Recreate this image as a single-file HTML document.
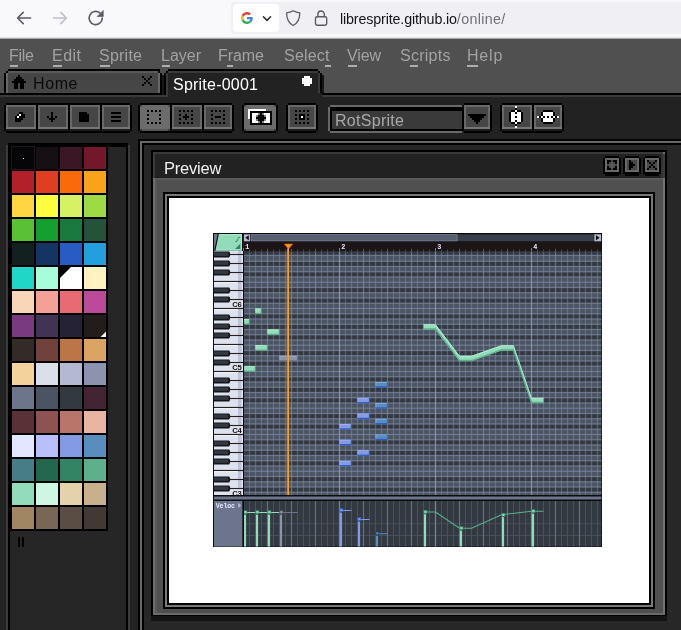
<!DOCTYPE html>
<html><head><meta charset="utf-8"><title>LibreSprite</title>
<style>
html,body{margin:0;padding:0}
body{width:681px;height:630px;overflow:hidden;background:#222;position:relative;font-family:"Liberation Sans",sans-serif}
body>div,body>svg{position:absolute;display:block}
.t{white-space:nowrap;will-change:transform}
.m{font-size:16px;line-height:20px;color:#a2a2a2}
</style></head><body>
<div style="left:0px;top:0px;width:681px;height:37px;background:#f9f9fb;"></div>
<div style="left:0px;top:37px;width:681px;height:1px;background:#e4e4e8;"></div>
<div style="left:0px;top:38px;width:681px;height:1px;background:#a9a9ad;"></div>
<div style="left:231px;top:2px;width:460px;height:32px;background:#f0f0f4;border-radius:4px"></div>
<div style="left:233px;top:4px;width:46px;height:28px;background:#ffffff;border-radius:4px"></div>
<svg style="left:0;top:0" width="340" height="37" viewBox="0 0 340 37" fill="none" stroke-linecap="round" stroke-linejoin="round">
<g stroke="#5b5b66" stroke-width="1.6"><path d="M30.6 18H17.6M23.200 12.4L17.6 18l5.600 5.600"/></g>
<g stroke="#bfbfc9" stroke-width="1.6"><path d="M53.400 18h13M60.800 12.400l5.600 5.600-5.600 5.600"/></g>
<g stroke="#5b5b66" stroke-width="1.6"><path d="M102.300 18a6.600 6.600 0 1 1-2.400-5.100"/></g>
<path d="M103.200 10.800v5.600h-5.600z" fill="#5b5b66" stroke="#5b5b66" stroke-width="0.800"/>
<g stroke="#2b2b33" stroke-width="1.5"><path d="M263.400 16.800l3.600 3.600 3.600-3.600"/></g>
<g stroke="#5b5b66" stroke-width="1.3"><path d="M293.200 10.800c2.200 1.300 4.300 1.900 6.600 2 0 6.500-2.400 10.600-6.600 12.700-4.200-2.100-6.600-6.200-6.600-12.700 2.300-.1 4.400-.7 6.600-2z"/></g>
<g stroke="#5b5b66" stroke-width="1.4"><rect x="315.500" y="16.800" width="11.200" height="8.400" rx="1.600"/><path d="M317.900 16.600v-2.400a3.200 3.200 0 0 1 6.400 0v2.400"/></g>
</svg>
<svg style="left:241px;top:12px" width="12" height="12" viewBox="0 0 48 48">
<path fill="#EA4335" d="M24 9.500c3.540 0 6.710 1.220 9.210 3.600l6.850-6.850C35.900 2.380 30.470 0 24 0 14.620 0 6.510 5.380 2.560 13.220l7.980 6.190C12.430 13.720 17.740 9.500 24 9.500z"/>
<path fill="#4285F4" d="M46.980 24.550c0-1.570-.15-3.090-.38-4.550H24v9.020h12.940c-.58 2.960-2.260 5.480-4.780 7.180l7.730 6c4.510-4.180 7.090-10.360 7.090-17.650z"/>
<path fill="#FBBC05" d="M10.530 28.590c-.48-1.450-.76-2.990-.76-4.590s.27-3.140.76-4.590l-7.980-6.190C.92 16.460 0 20.120 0 24c0 3.880.92 7.540 2.560 10.780l7.970-6.190z"/>
<path fill="#34A853" d="M24 48c6.480 0 11.930-2.130 15.890-5.810l-7.730-6c-2.150 1.450-4.920 2.300-8.160 2.300-6.260 0-11.570-4.220-13.470-9.910l-7.980 6.190C6.510 42.620 14.620 48 24 48z"/>
</svg>
<div class="t" style="left:340px;top:9.5px;font-size:14.3px;line-height:18px;color:#15141a" id="url"><span style="letter-spacing:-0.150px">libresprite.github.io</span><span style="color:#6f6f78;letter-spacing:0.330px">/online/</span></div>
<div style="left:0px;top:39px;width:681px;height:54px;background:#505050;"></div>
<div class="t m" id="m0" style="left:9.2px;top:45.5px;letter-spacing:-0.260px;">File</div>
<div class="t m" id="m1" style="left:52.2px;top:45.5px;letter-spacing:0.474px;">Edit</div>
<div class="t m" id="m2" style="left:99.2px;top:45.5px;letter-spacing:0.241px;">Sprite</div>
<div class="t m" id="m3" style="left:161.2px;top:45.5px;letter-spacing:-0.008px;">Layer</div>
<div class="t m" id="m4" style="left:218.2px;top:45.5px;letter-spacing:-0.059px;">Frame</div>
<div class="t m" id="m5" style="left:283.7px;top:45.5px;letter-spacing:0.206px;">Select</div>
<div class="t m" id="m6" style="left:347.2px;top:45.5px;letter-spacing:-0.130px;">View</div>
<div class="t m" id="m7" style="left:399.7px;top:45.5px;letter-spacing:0.266px;">Scripts</div>
<div class="t m" id="m8" style="left:466.59999999999997px;top:45.5px;letter-spacing:0.798px;">Help</div>
<div style="left:10px;top:65px;width:8px;height:2px;background:#aeaeae;"></div>
<div style="left:53px;top:65px;width:9px;height:2px;background:#aeaeae;"></div>
<div style="left:100px;top:65px;width:9.5px;height:2px;background:#aeaeae;"></div>
<div style="left:162px;top:65px;width:8px;height:2px;background:#aeaeae;"></div>
<div style="left:227px;top:65px;width:6px;height:2px;background:#aeaeae;"></div>
<div style="left:325px;top:65px;width:5.5px;height:2px;background:#aeaeae;"></div>
<div style="left:348px;top:65px;width:9px;height:2px;background:#aeaeae;"></div>
<div style="left:410px;top:65px;width:7.5px;height:2px;background:#aeaeae;"></div>
<div style="left:467.4px;top:65px;width:11px;height:2px;background:#aeaeae;"></div>
<div style="left:0px;top:93px;width:681px;height:2px;background:#000000;"></div>
<div style="left:0px;top:95px;width:681px;height:2px;background:#3a3a3a;"></div>
<div style="left:0px;top:97px;width:681px;height:533px;background:#222222;"></div>
<div style="left:8px;top:69px;width:152px;height:2px;background:#000000;"></div>
<div style="left:4px;top:73px;width:2px;height:20px;background:#000000;"></div>
<div style="left:6px;top:71px;width:2px;height:2px;background:#000000;"></div>
<div style="left:160px;top:73px;width:2px;height:22px;background:#000000;"></div>
<div style="left:158px;top:71px;width:2px;height:2px;background:#000000;"></div>
<div style="left:8px;top:71px;width:150px;height:22px;background:#464646;"></div>
<div style="left:6px;top:73px;width:2px;height:20px;background:#686868;"></div>
<div style="left:8px;top:71px;width:150px;height:2px;background:#5a5a5a;"></div>
<div style="left:158px;top:73px;width:2px;height:20px;background:#686868;"></div>
<div style="left:162px;top:75px;width:2px;height:20px;background:#181513;"></div>
<div style="left:168px;top:69px;width:150px;height:2px;background:#000000;"></div>
<div style="left:164px;top:73px;width:2px;height:22px;background:#000000;"></div>
<div style="left:166px;top:71px;width:2px;height:2px;background:#000000;"></div>
<div style="left:318px;top:71px;width:2px;height:2px;background:#000000;"></div>
<div style="left:320px;top:73px;width:2px;height:20px;background:#000000;"></div>
<div style="left:322px;top:75px;width:2px;height:18px;background:#181513;"></div>
<div style="left:166px;top:73px;width:154px;height:24px;background:#222222;"></div>
<div style="left:168px;top:71px;width:150px;height:2px;background:#3a3a3a;"></div>
<div style="left:166px;top:73px;width:2px;height:24px;background:#3a3a3a;"></div>
<div style="left:318px;top:73px;width:2px;height:20px;background:#3a3a3a;"></div>
<div style="left:320px;top:93px;width:2px;height:4px;background:#222222;"></div>
<div style="left:318px;top:93px;width:2px;height:4px;background:#222222;"></div>
<div style="left:18px;top:75px;width:2px;height:2px;background:#000000;"></div>
<div style="left:16px;top:77px;width:6px;height:2px;background:#000000;"></div>
<div style="left:14px;top:79px;width:10px;height:2px;background:#000000;"></div>
<div style="left:12px;top:81px;width:14px;height:2px;background:#000000;"></div>
<div style="left:14px;top:83px;width:4px;height:2px;background:#000000;"></div>
<div style="left:20px;top:83px;width:4px;height:2px;background:#000000;"></div>
<div style="left:14px;top:85px;width:4px;height:2px;background:#000000;"></div>
<div style="left:20px;top:85px;width:4px;height:2px;background:#000000;"></div>
<div style="left:14px;top:87px;width:4px;height:2px;background:#000000;"></div>
<div style="left:20px;top:87px;width:4px;height:2px;background:#000000;"></div>
<div class="t" id="thome" style="left:33px;top:74px;font-size:16px;line-height:20px;color:#0a0a0a;letter-spacing:0.604px;">Home</div>
<div class="t" id="tsprite" style="left:173px;top:74.5px;font-size:16px;line-height:20px;color:#ffffff;letter-spacing:0.228px;">Sprite-0001</div>
<div style="left:142px;top:76px;width:2px;height:2px;background:#000000;"></div>
<div style="left:150px;top:76px;width:2px;height:2px;background:#000000;"></div>
<div style="left:144px;top:78px;width:2px;height:2px;background:#000000;"></div>
<div style="left:148px;top:78px;width:2px;height:2px;background:#000000;"></div>
<div style="left:146px;top:80px;width:2px;height:2px;background:#000000;"></div>
<div style="left:144px;top:82px;width:2px;height:2px;background:#000000;"></div>
<div style="left:148px;top:82px;width:2px;height:2px;background:#000000;"></div>
<div style="left:142px;top:84px;width:2px;height:2px;background:#000000;"></div>
<div style="left:150px;top:84px;width:2px;height:2px;background:#000000;"></div>
<div style="left:304px;top:76px;width:6px;height:2px;background:#ffffff;"></div>
<div style="left:302px;top:78px;width:10px;height:2px;background:#ffffff;"></div>
<div style="left:302px;top:80px;width:10px;height:2px;background:#ffffff;"></div>
<div style="left:302px;top:82px;width:10px;height:2px;background:#ffffff;"></div>
<div style="left:304px;top:84px;width:6px;height:2px;background:#ffffff;"></div>
<div style="left:6px;top:103px;width:124px;height:2px;background:#000000;"></div>
<div style="left:6px;top:129px;width:124px;height:2px;background:#1b1b1b;"></div>
<div style="left:6px;top:131px;width:124px;height:2px;background:#000000;"></div>
<div style="left:4px;top:105px;width:2px;height:26px;background:#000000;"></div>
<div style="left:6px;top:105px;width:30px;height:24px;background:#686868;"></div>
<div style="left:8px;top:107px;width:26px;height:20px;background:#464646;"></div>
<div style="left:6px;top:127px;width:30px;height:2px;background:#767676;"></div>
<div style="left:36px;top:105px;width:2px;height:26px;background:#000000;"></div>
<div style="left:38px;top:105px;width:30px;height:24px;background:#686868;"></div>
<div style="left:40px;top:107px;width:26px;height:20px;background:#464646;"></div>
<div style="left:38px;top:127px;width:30px;height:2px;background:#767676;"></div>
<div style="left:68px;top:105px;width:2px;height:26px;background:#000000;"></div>
<div style="left:70px;top:105px;width:30px;height:24px;background:#686868;"></div>
<div style="left:72px;top:107px;width:26px;height:20px;background:#464646;"></div>
<div style="left:70px;top:127px;width:30px;height:2px;background:#767676;"></div>
<div style="left:100px;top:105px;width:2px;height:26px;background:#000000;"></div>
<div style="left:102px;top:105px;width:28px;height:24px;background:#686868;"></div>
<div style="left:104px;top:107px;width:24px;height:20px;background:#464646;"></div>
<div style="left:102px;top:127px;width:28px;height:2px;background:#767676;"></div>
<div style="left:130px;top:105px;width:2px;height:26px;background:#000000;"></div>
<div style="left:140px;top:103px;width:92px;height:2px;background:#000000;"></div>
<div style="left:140px;top:129px;width:92px;height:2px;background:#1b1b1b;"></div>
<div style="left:140px;top:131px;width:92px;height:2px;background:#000000;"></div>
<div style="left:138px;top:105px;width:2px;height:26px;background:#000000;"></div>
<div style="left:140px;top:105px;width:30px;height:24px;background:#6c6c6c;"></div>
<div style="left:140px;top:129px;width:30px;height:2px;background:#565656;"></div>
<div style="left:140px;top:105px;width:2px;height:2px;background:#4a4a4a;"></div>
<div style="left:168px;top:105px;width:2px;height:2px;background:#4a4a4a;"></div>
<div style="left:140px;top:129px;width:2px;height:2px;background:#3a3a3a;"></div>
<div style="left:168px;top:129px;width:2px;height:2px;background:#3a3a3a;"></div>
<div style="left:170px;top:105px;width:2px;height:26px;background:#000000;"></div>
<div style="left:172px;top:105px;width:30px;height:24px;background:#686868;"></div>
<div style="left:174px;top:107px;width:26px;height:20px;background:#464646;"></div>
<div style="left:172px;top:127px;width:30px;height:2px;background:#767676;"></div>
<div style="left:202px;top:105px;width:2px;height:26px;background:#000000;"></div>
<div style="left:204px;top:105px;width:28px;height:24px;background:#686868;"></div>
<div style="left:206px;top:107px;width:24px;height:20px;background:#464646;"></div>
<div style="left:204px;top:127px;width:28px;height:2px;background:#767676;"></div>
<div style="left:232px;top:105px;width:2px;height:26px;background:#000000;"></div>
<div style="left:244px;top:103px;width:32px;height:2px;background:#000000;"></div>
<div style="left:244px;top:129px;width:32px;height:2px;background:#1b1b1b;"></div>
<div style="left:244px;top:131px;width:32px;height:2px;background:#000000;"></div>
<div style="left:242px;top:105px;width:2px;height:26px;background:#000000;"></div>
<div style="left:244px;top:105px;width:32px;height:24px;background:#6c6c6c;"></div>
<div style="left:244px;top:129px;width:32px;height:2px;background:#565656;"></div>
<div style="left:244px;top:105px;width:2px;height:2px;background:#4a4a4a;"></div>
<div style="left:274px;top:105px;width:2px;height:2px;background:#4a4a4a;"></div>
<div style="left:244px;top:129px;width:2px;height:2px;background:#3a3a3a;"></div>
<div style="left:274px;top:129px;width:2px;height:2px;background:#3a3a3a;"></div>
<div style="left:276px;top:105px;width:2px;height:26px;background:#000000;"></div>
<div style="left:288px;top:103px;width:28px;height:2px;background:#000000;"></div>
<div style="left:288px;top:129px;width:28px;height:2px;background:#1b1b1b;"></div>
<div style="left:288px;top:131px;width:28px;height:2px;background:#000000;"></div>
<div style="left:286px;top:105px;width:2px;height:26px;background:#000000;"></div>
<div style="left:288px;top:105px;width:28px;height:24px;background:#686868;"></div>
<div style="left:290px;top:107px;width:24px;height:20px;background:#464646;"></div>
<div style="left:288px;top:127px;width:28px;height:2px;background:#767676;"></div>
<div style="left:316px;top:105px;width:2px;height:26px;background:#000000;"></div>
<div style="left:464px;top:103px;width:26px;height:2px;background:#000000;"></div>
<div style="left:464px;top:129px;width:26px;height:2px;background:#1b1b1b;"></div>
<div style="left:464px;top:131px;width:26px;height:2px;background:#000000;"></div>
<div style="left:462px;top:105px;width:2px;height:26px;background:#000000;"></div>
<div style="left:464px;top:105px;width:26px;height:24px;background:#686868;"></div>
<div style="left:466px;top:107px;width:22px;height:20px;background:#464646;"></div>
<div style="left:464px;top:127px;width:26px;height:2px;background:#767676;"></div>
<div style="left:490px;top:105px;width:2px;height:26px;background:#000000;"></div>
<div style="left:502px;top:103px;width:60px;height:2px;background:#000000;"></div>
<div style="left:502px;top:129px;width:60px;height:2px;background:#1b1b1b;"></div>
<div style="left:502px;top:131px;width:60px;height:2px;background:#000000;"></div>
<div style="left:500px;top:105px;width:2px;height:26px;background:#000000;"></div>
<div style="left:502px;top:105px;width:30px;height:24px;background:#686868;"></div>
<div style="left:504px;top:107px;width:26px;height:20px;background:#464646;"></div>
<div style="left:502px;top:127px;width:30px;height:2px;background:#767676;"></div>
<div style="left:532px;top:105px;width:2px;height:26px;background:#000000;"></div>
<div style="left:534px;top:105px;width:28px;height:24px;background:#686868;"></div>
<div style="left:536px;top:107px;width:24px;height:20px;background:#464646;"></div>
<div style="left:534px;top:127px;width:28px;height:2px;background:#767676;"></div>
<div style="left:562px;top:105px;width:2px;height:26px;background:#000000;"></div>
<div style="left:19px;top:112px;width:4px;height:2px;background:#000000;"></div>
<div style="left:17px;top:114px;width:2px;height:2px;background:#000000;"></div>
<div style="left:19px;top:114px;width:2px;height:2px;background:#ffffff;"></div>
<div style="left:21px;top:114px;width:4px;height:2px;background:#000000;"></div>
<div style="left:15px;top:116px;width:2px;height:2px;background:#000000;"></div>
<div style="left:17px;top:116px;width:2px;height:2px;background:#ffffff;"></div>
<div style="left:19px;top:116px;width:6px;height:2px;background:#000000;"></div>
<div style="left:15px;top:118px;width:8px;height:2px;background:#000000;"></div>
<div style="left:15px;top:120px;width:6px;height:2px;background:#000000;"></div>
<div style="left:51px;top:112px;width:2px;height:10px;background:#000000;"></div>
<div style="left:47px;top:116px;width:2px;height:2px;background:#000000;"></div>
<div style="left:55px;top:116px;width:2px;height:2px;background:#000000;"></div>
<div style="left:49px;top:118px;width:6px;height:2px;background:#000000;"></div>
<div style="left:79px;top:112px;width:8px;height:2px;background:#000000;"></div>
<div style="left:79px;top:114px;width:10px;height:2px;background:#000000;"></div>
<div style="left:79px;top:116px;width:10px;height:2px;background:#000000;"></div>
<div style="left:79px;top:118px;width:10px;height:2px;background:#000000;"></div>
<div style="left:79px;top:120px;width:10px;height:2px;background:#000000;"></div>
<div style="left:111px;top:112px;width:10px;height:2px;background:#000000;"></div>
<div style="left:111px;top:116px;width:10px;height:2px;background:#000000;"></div>
<div style="left:111px;top:120px;width:10px;height:2px;background:#000000;"></div>
<div style="left:147px;top:110px;width:2px;height:2px;background:#000000;"></div>
<div style="left:147px;top:114px;width:2px;height:2px;background:#000000;"></div>
<div style="left:147px;top:118px;width:2px;height:2px;background:#000000;"></div>
<div style="left:147px;top:122px;width:2px;height:2px;background:#000000;"></div>
<div style="left:151px;top:110px;width:2px;height:2px;background:#000000;"></div>
<div style="left:151px;top:122px;width:2px;height:2px;background:#000000;"></div>
<div style="left:155px;top:110px;width:2px;height:2px;background:#000000;"></div>
<div style="left:155px;top:122px;width:2px;height:2px;background:#000000;"></div>
<div style="left:159px;top:110px;width:2px;height:2px;background:#000000;"></div>
<div style="left:159px;top:114px;width:2px;height:2px;background:#000000;"></div>
<div style="left:159px;top:118px;width:2px;height:2px;background:#000000;"></div>
<div style="left:159px;top:122px;width:2px;height:2px;background:#000000;"></div>
<div style="left:179px;top:110px;width:2px;height:2px;background:#000000;"></div>
<div style="left:179px;top:114px;width:2px;height:2px;background:#000000;"></div>
<div style="left:179px;top:118px;width:2px;height:2px;background:#000000;"></div>
<div style="left:179px;top:122px;width:2px;height:2px;background:#000000;"></div>
<div style="left:183px;top:110px;width:2px;height:2px;background:#000000;"></div>
<div style="left:183px;top:122px;width:2px;height:2px;background:#000000;"></div>
<div style="left:187px;top:110px;width:2px;height:2px;background:#000000;"></div>
<div style="left:187px;top:122px;width:2px;height:2px;background:#000000;"></div>
<div style="left:191px;top:110px;width:2px;height:2px;background:#000000;"></div>
<div style="left:191px;top:114px;width:2px;height:2px;background:#000000;"></div>
<div style="left:191px;top:118px;width:2px;height:2px;background:#000000;"></div>
<div style="left:191px;top:122px;width:2px;height:2px;background:#000000;"></div>
<div style="left:185px;top:114px;width:2px;height:6px;background:#000000;"></div>
<div style="left:183px;top:116px;width:6px;height:2px;background:#000000;"></div>
<div style="left:211px;top:110px;width:2px;height:2px;background:#000000;"></div>
<div style="left:211px;top:114px;width:2px;height:2px;background:#000000;"></div>
<div style="left:211px;top:118px;width:2px;height:2px;background:#000000;"></div>
<div style="left:211px;top:122px;width:2px;height:2px;background:#000000;"></div>
<div style="left:215px;top:110px;width:2px;height:2px;background:#000000;"></div>
<div style="left:215px;top:122px;width:2px;height:2px;background:#000000;"></div>
<div style="left:219px;top:110px;width:2px;height:2px;background:#000000;"></div>
<div style="left:219px;top:122px;width:2px;height:2px;background:#000000;"></div>
<div style="left:223px;top:110px;width:2px;height:2px;background:#000000;"></div>
<div style="left:223px;top:114px;width:2px;height:2px;background:#000000;"></div>
<div style="left:223px;top:118px;width:2px;height:2px;background:#000000;"></div>
<div style="left:223px;top:122px;width:2px;height:2px;background:#000000;"></div>
<div style="left:215px;top:116px;width:6px;height:2px;background:#000000;"></div>
<div style="left:248px;top:109px;width:18px;height:10px;background:#ffffff;"></div>
<div style="left:250px;top:111px;width:22px;height:14px;background:#000000;"></div>
<div style="left:252px;top:113px;width:18px;height:10px;background:#ffffff;"></div>
<div style="left:258px;top:113px;width:2px;height:2px;background:#808080;"></div>
<div style="left:260px;top:113px;width:2px;height:2px;background:#000000;"></div>
<div style="left:262px;top:113px;width:2px;height:2px;background:#808080;"></div>
<div style="left:256px;top:115px;width:2px;height:2px;background:#808080;"></div>
<div style="left:258px;top:115px;width:6px;height:2px;background:#000000;"></div>
<div style="left:264px;top:115px;width:2px;height:2px;background:#808080;"></div>
<div style="left:256px;top:117px;width:10px;height:2px;background:#000000;"></div>
<div style="left:256px;top:119px;width:2px;height:2px;background:#808080;"></div>
<div style="left:258px;top:119px;width:6px;height:2px;background:#000000;"></div>
<div style="left:264px;top:119px;width:2px;height:2px;background:#808080;"></div>
<div style="left:258px;top:121px;width:2px;height:2px;background:#808080;"></div>
<div style="left:260px;top:121px;width:2px;height:2px;background:#000000;"></div>
<div style="left:262px;top:121px;width:2px;height:2px;background:#808080;"></div>
<div style="left:295px;top:110px;width:2px;height:2px;background:#000000;"></div>
<div style="left:295px;top:114px;width:2px;height:2px;background:#000000;"></div>
<div style="left:295px;top:118px;width:2px;height:2px;background:#000000;"></div>
<div style="left:295px;top:122px;width:2px;height:2px;background:#000000;"></div>
<div style="left:299px;top:110px;width:2px;height:2px;background:#000000;"></div>
<div style="left:299px;top:122px;width:2px;height:2px;background:#000000;"></div>
<div style="left:303px;top:110px;width:2px;height:2px;background:#000000;"></div>
<div style="left:303px;top:122px;width:2px;height:2px;background:#000000;"></div>
<div style="left:307px;top:110px;width:2px;height:2px;background:#000000;"></div>
<div style="left:307px;top:114px;width:2px;height:2px;background:#000000;"></div>
<div style="left:307px;top:118px;width:2px;height:2px;background:#000000;"></div>
<div style="left:307px;top:122px;width:2px;height:2px;background:#000000;"></div>
<div style="left:299px;top:114px;width:6px;height:6px;background:#000000;"></div>
<div style="left:301px;top:116px;width:2px;height:2px;background:#ffffff;"></div>
<div style="left:328px;top:107px;width:2px;height:24px;background:#686868;"></div>
<div style="left:330px;top:105px;width:132px;height:2px;background:#686868;"></div>
<div style="left:330px;top:131px;width:132px;height:2px;background:#686868;"></div>
<div style="left:330px;top:107px;width:132px;height:24px;background:#000000;"></div>
<div style="left:332px;top:111px;width:130px;height:18px;background:#3a3a3a;"></div>
<div class="t" id="trot" style="left:334.5px;top:111.3px;font-size:16px;line-height:20px;color:#a8a8a8;letter-spacing:0.287px;">RotSprite</div>
<div style="left:468px;top:114px;width:18px;height:2px;background:#000000;"></div>
<div style="left:470px;top:116px;width:14px;height:2px;background:#000000;"></div>
<div style="left:472px;top:118px;width:10px;height:2px;background:#000000;"></div>
<div style="left:474px;top:120px;width:6px;height:2px;background:#000000;"></div>
<div style="left:476px;top:122px;width:2px;height:2px;background:#000000;"></div>
<div style="left:511px;top:110px;width:10px;height:2px;background:#000000;"></div>
<div style="left:509px;top:112px;width:2px;height:2px;background:#000000;"></div>
<div style="left:511px;top:112px;width:10px;height:2px;background:#ffffff;"></div>
<div style="left:521px;top:112px;width:2px;height:2px;background:#000000;"></div>
<div style="left:509px;top:114px;width:2px;height:2px;background:#000000;"></div>
<div style="left:511px;top:114px;width:10px;height:2px;background:#ffffff;"></div>
<div style="left:521px;top:114px;width:2px;height:2px;background:#000000;"></div>
<div style="left:509px;top:116px;width:2px;height:2px;background:#000000;"></div>
<div style="left:511px;top:116px;width:10px;height:2px;background:#ffffff;"></div>
<div style="left:521px;top:116px;width:2px;height:2px;background:#000000;"></div>
<div style="left:509px;top:118px;width:2px;height:2px;background:#000000;"></div>
<div style="left:511px;top:118px;width:10px;height:2px;background:#ffffff;"></div>
<div style="left:521px;top:118px;width:2px;height:2px;background:#000000;"></div>
<div style="left:509px;top:120px;width:2px;height:2px;background:#000000;"></div>
<div style="left:511px;top:120px;width:10px;height:2px;background:#ffffff;"></div>
<div style="left:521px;top:120px;width:2px;height:2px;background:#000000;"></div>
<div style="left:511px;top:122px;width:10px;height:2px;background:#000000;"></div>
<div style="left:515px;top:106px;width:2px;height:2px;background:#ffffff;"></div>
<div style="left:515px;top:108px;width:2px;height:2px;background:#000000;"></div>
<div style="left:515px;top:110px;width:2px;height:2px;background:#ffffff;"></div>
<div style="left:515px;top:112px;width:2px;height:2px;background:#000000;"></div>
<div style="left:515px;top:114px;width:2px;height:2px;background:#ffffff;"></div>
<div style="left:515px;top:116px;width:2px;height:2px;background:#000000;"></div>
<div style="left:515px;top:118px;width:2px;height:2px;background:#ffffff;"></div>
<div style="left:515px;top:120px;width:2px;height:2px;background:#000000;"></div>
<div style="left:515px;top:122px;width:2px;height:2px;background:#ffffff;"></div>
<div style="left:515px;top:124px;width:2px;height:2px;background:#000000;"></div>
<div style="left:515px;top:126px;width:2px;height:2px;background:#ffffff;"></div>
<div style="left:543px;top:110px;width:10px;height:2px;background:#000000;"></div>
<div style="left:541px;top:112px;width:2px;height:2px;background:#000000;"></div>
<div style="left:543px;top:112px;width:10px;height:2px;background:#ffffff;"></div>
<div style="left:553px;top:112px;width:2px;height:2px;background:#000000;"></div>
<div style="left:541px;top:114px;width:2px;height:2px;background:#000000;"></div>
<div style="left:543px;top:114px;width:10px;height:2px;background:#ffffff;"></div>
<div style="left:553px;top:114px;width:2px;height:2px;background:#000000;"></div>
<div style="left:541px;top:116px;width:2px;height:2px;background:#000000;"></div>
<div style="left:543px;top:116px;width:10px;height:2px;background:#ffffff;"></div>
<div style="left:553px;top:116px;width:2px;height:2px;background:#000000;"></div>
<div style="left:541px;top:118px;width:2px;height:2px;background:#000000;"></div>
<div style="left:543px;top:118px;width:10px;height:2px;background:#ffffff;"></div>
<div style="left:553px;top:118px;width:2px;height:2px;background:#000000;"></div>
<div style="left:541px;top:120px;width:2px;height:2px;background:#000000;"></div>
<div style="left:543px;top:120px;width:10px;height:2px;background:#ffffff;"></div>
<div style="left:553px;top:120px;width:2px;height:2px;background:#000000;"></div>
<div style="left:543px;top:122px;width:10px;height:2px;background:#000000;"></div>
<div style="left:537px;top:116px;width:2px;height:2px;background:#ffffff;"></div>
<div style="left:539px;top:116px;width:2px;height:2px;background:#000000;"></div>
<div style="left:541px;top:116px;width:2px;height:2px;background:#ffffff;"></div>
<div style="left:543px;top:116px;width:2px;height:2px;background:#000000;"></div>
<div style="left:545px;top:116px;width:2px;height:2px;background:#ffffff;"></div>
<div style="left:547px;top:116px;width:2px;height:2px;background:#000000;"></div>
<div style="left:549px;top:116px;width:2px;height:2px;background:#ffffff;"></div>
<div style="left:551px;top:116px;width:2px;height:2px;background:#000000;"></div>
<div style="left:553px;top:116px;width:2px;height:2px;background:#ffffff;"></div>
<div style="left:555px;top:116px;width:2px;height:2px;background:#000000;"></div>
<div style="left:557px;top:116px;width:2px;height:2px;background:#ffffff;"></div>
<div style="left:6px;top:145px;width:2px;height:485px;background:#3a3a3a;"></div>
<div style="left:8px;top:143px;width:2px;height:487px;background:#000000;"></div>
<div style="left:10px;top:143px;width:118px;height:4px;background:#000000;"></div>
<div style="left:10px;top:147px;width:116px;height:483px;background:#262626;"></div>
<div style="left:126px;top:143px;width:2px;height:487px;background:#000000;"></div>
<div style="left:128px;top:145px;width:2px;height:485px;background:#3a3a3a;"></div>
<div style="left:10px;top:147px;width:98px;height:384px;background:#000000;"></div>
<div style="left:12px;top:147px;width:22px;height:22px;background:#060608;"></div>
<div style="left:36px;top:147px;width:22px;height:22px;background:#141013;"></div>
<div style="left:60px;top:147px;width:22px;height:22px;background:#3b1725;"></div>
<div style="left:84px;top:147px;width:22px;height:22px;background:#73172d;"></div>
<div style="left:12px;top:171px;width:22px;height:22px;background:#b4202a;"></div>
<div style="left:36px;top:171px;width:22px;height:22px;background:#df3e23;"></div>
<div style="left:60px;top:171px;width:22px;height:22px;background:#fa6a0a;"></div>
<div style="left:84px;top:171px;width:22px;height:22px;background:#f9a31b;"></div>
<div style="left:12px;top:195px;width:22px;height:22px;background:#ffd541;"></div>
<div style="left:36px;top:195px;width:22px;height:22px;background:#fffc40;"></div>
<div style="left:60px;top:195px;width:22px;height:22px;background:#d6f264;"></div>
<div style="left:84px;top:195px;width:22px;height:22px;background:#9cdb43;"></div>
<div style="left:12px;top:219px;width:22px;height:22px;background:#59c135;"></div>
<div style="left:36px;top:219px;width:22px;height:22px;background:#14a02e;"></div>
<div style="left:60px;top:219px;width:22px;height:22px;background:#1a7a3e;"></div>
<div style="left:84px;top:219px;width:22px;height:22px;background:#24523b;"></div>
<div style="left:12px;top:243px;width:22px;height:22px;background:#122020;"></div>
<div style="left:36px;top:243px;width:22px;height:22px;background:#143464;"></div>
<div style="left:60px;top:243px;width:22px;height:22px;background:#285cc4;"></div>
<div style="left:84px;top:243px;width:22px;height:22px;background:#249fde;"></div>
<div style="left:12px;top:267px;width:22px;height:22px;background:#20d6c7;"></div>
<div style="left:36px;top:267px;width:22px;height:22px;background:#a6fcdb;"></div>
<div style="left:60px;top:267px;width:22px;height:22px;background:#ffffff;"></div>
<div style="left:84px;top:267px;width:22px;height:22px;background:#fef3c0;"></div>
<div style="left:12px;top:291px;width:22px;height:22px;background:#fad6b8;"></div>
<div style="left:36px;top:291px;width:22px;height:22px;background:#f5a097;"></div>
<div style="left:60px;top:291px;width:22px;height:22px;background:#e86a73;"></div>
<div style="left:84px;top:291px;width:22px;height:22px;background:#bc4a9b;"></div>
<div style="left:12px;top:315px;width:22px;height:22px;background:#793a80;"></div>
<div style="left:36px;top:315px;width:22px;height:22px;background:#403353;"></div>
<div style="left:60px;top:315px;width:22px;height:22px;background:#242234;"></div>
<div style="left:84px;top:315px;width:22px;height:22px;background:#221c1a;"></div>
<div style="left:12px;top:339px;width:22px;height:22px;background:#322b28;"></div>
<div style="left:36px;top:339px;width:22px;height:22px;background:#71413b;"></div>
<div style="left:60px;top:339px;width:22px;height:22px;background:#bb7547;"></div>
<div style="left:84px;top:339px;width:22px;height:22px;background:#dba463;"></div>
<div style="left:12px;top:363px;width:22px;height:22px;background:#f4d29c;"></div>
<div style="left:36px;top:363px;width:22px;height:22px;background:#dae0ea;"></div>
<div style="left:60px;top:363px;width:22px;height:22px;background:#b3b9d1;"></div>
<div style="left:84px;top:363px;width:22px;height:22px;background:#8b93af;"></div>
<div style="left:12px;top:387px;width:22px;height:22px;background:#6d758d;"></div>
<div style="left:36px;top:387px;width:22px;height:22px;background:#4a5462;"></div>
<div style="left:60px;top:387px;width:22px;height:22px;background:#333941;"></div>
<div style="left:84px;top:387px;width:22px;height:22px;background:#422433;"></div>
<div style="left:12px;top:411px;width:22px;height:22px;background:#5b3138;"></div>
<div style="left:36px;top:411px;width:22px;height:22px;background:#8e5252;"></div>
<div style="left:60px;top:411px;width:22px;height:22px;background:#ba756a;"></div>
<div style="left:84px;top:411px;width:22px;height:22px;background:#e9b5a3;"></div>
<div style="left:12px;top:435px;width:22px;height:22px;background:#e3e6ff;"></div>
<div style="left:36px;top:435px;width:22px;height:22px;background:#b9bffb;"></div>
<div style="left:60px;top:435px;width:22px;height:22px;background:#849be4;"></div>
<div style="left:84px;top:435px;width:22px;height:22px;background:#588dbe;"></div>
<div style="left:12px;top:459px;width:22px;height:22px;background:#477d85;"></div>
<div style="left:36px;top:459px;width:22px;height:22px;background:#23674e;"></div>
<div style="left:60px;top:459px;width:22px;height:22px;background:#328464;"></div>
<div style="left:84px;top:459px;width:22px;height:22px;background:#5daf8d;"></div>
<div style="left:12px;top:483px;width:22px;height:22px;background:#92dcba;"></div>
<div style="left:36px;top:483px;width:22px;height:22px;background:#cdf7e2;"></div>
<div style="left:60px;top:483px;width:22px;height:22px;background:#e4d2aa;"></div>
<div style="left:84px;top:483px;width:22px;height:22px;background:#c7b08b;"></div>
<div style="left:12px;top:507px;width:22px;height:22px;background:#a08662;"></div>
<div style="left:36px;top:507px;width:22px;height:22px;background:#796755;"></div>
<div style="left:60px;top:507px;width:22px;height:22px;background:#5a4e44;"></div>
<div style="left:84px;top:507px;width:22px;height:22px;background:#423934;"></div>
<div style="left:11px;top:146px;width:24px;height:24px;background:#19191c;"></div>
<div style="left:12px;top:147px;width:22px;height:22px;background:#060608;"></div>
<div style="left:23px;top:158px;width:1px;height:1px;background:#ffffff;"></div>
<svg style="left:60px;top:267px" width="22" height="22"><path d="M0 0H11L0 11z" fill="#000"/></svg>
<svg style="left:84px;top:315px" width="22" height="22"><path d="M22 16.500V22H16.500z" fill="#fff"/></svg>
<div style="left:18px;top:537px;width:2px;height:10px;background:#000000;"></div>
<div style="left:22px;top:537px;width:2px;height:10px;background:#000000;"></div>
<div style="left:138px;top:139px;width:543px;height:2px;background:#000000;"></div>
<div style="left:138px;top:141px;width:2px;height:489px;background:#000000;"></div>
<div style="left:140px;top:141px;width:541px;height:2px;background:#686868;"></div>
<div style="left:140px;top:143px;width:2px;height:487px;background:#686868;"></div>
<div style="left:142px;top:143px;width:539px;height:2px;background:#000000;"></div>
<div style="left:142px;top:145px;width:2px;height:485px;background:#000000;"></div>
<div style="left:144px;top:145px;width:537px;height:485px;background:#272727;"></div>
<div style="left:151px;top:150px;width:516px;height:466px;background:#000000;"></div>
<div style="left:151px;top:616px;width:516px;height:5px;background:#141414;"></div>
<div style="left:153px;top:152px;width:512px;height:26px;background:#222222;"></div>
<div style="left:153px;top:152px;width:510px;height:2px;background:#3a3a3a;"></div>
<div style="left:153px;top:154px;width:2px;height:24px;background:#3a3a3a;"></div>
<div style="left:661px;top:154px;width:2px;height:24px;background:#333333;"></div>
<div style="left:663px;top:152px;width:2px;height:2px;background:#707070;"></div>
<div style="left:663px;top:154px;width:2px;height:24px;background:#3c3c3c;"></div>
<div style="left:153px;top:178px;width:512px;height:437px;background:#505050;"></div>
<div style="left:153px;top:178px;width:510px;height:2px;background:#5a5a5a;"></div>
<div style="left:155px;top:180px;width:2px;height:433px;background:#5a5a5a;"></div>
<div style="left:153px;top:178px;width:2px;height:437px;background:#6c6c6c;"></div>
<div style="left:663px;top:178px;width:2px;height:437px;background:#747474;"></div>
<div style="left:153px;top:613px;width:512px;height:2px;background:#6a6a6a;"></div>
<div class="t" id="tprev" style="left:163.5px;top:158.3px;font-size:16.5px;line-height:20px;color:#f0f0f0;letter-spacing:-0.215px;">Preview</div>
<div style="left:603px;top:156px;width:18px;height:20px;background:#000000;"></div>
<div style="left:605px;top:158px;width:14px;height:14px;background:#686868;"></div>
<div style="left:607px;top:160px;width:10px;height:10px;background:#464646;"></div>
<div style="left:603px;top:156px;width:2px;height:2px;background:#222222;"></div>
<div style="left:619px;top:156px;width:2px;height:2px;background:#222222;"></div>
<div style="left:603px;top:174px;width:2px;height:2px;background:#222222;"></div>
<div style="left:619px;top:174px;width:2px;height:2px;background:#222222;"></div>
<div style="left:623px;top:156px;width:18px;height:20px;background:#000000;"></div>
<div style="left:625px;top:158px;width:14px;height:14px;background:#686868;"></div>
<div style="left:627px;top:160px;width:10px;height:10px;background:#464646;"></div>
<div style="left:623px;top:156px;width:2px;height:2px;background:#222222;"></div>
<div style="left:639px;top:156px;width:2px;height:2px;background:#222222;"></div>
<div style="left:623px;top:174px;width:2px;height:2px;background:#222222;"></div>
<div style="left:639px;top:174px;width:2px;height:2px;background:#222222;"></div>
<div style="left:643px;top:156px;width:18px;height:20px;background:#000000;"></div>
<div style="left:645px;top:158px;width:14px;height:14px;background:#686868;"></div>
<div style="left:647px;top:160px;width:10px;height:10px;background:#464646;"></div>
<div style="left:643px;top:156px;width:2px;height:2px;background:#222222;"></div>
<div style="left:659px;top:156px;width:2px;height:2px;background:#222222;"></div>
<div style="left:643px;top:174px;width:2px;height:2px;background:#222222;"></div>
<div style="left:659px;top:174px;width:2px;height:2px;background:#222222;"></div>
<div style="left:607px;top:160px;width:4px;height:2px;background:#000000;"></div>
<div style="left:613px;top:160px;width:4px;height:2px;background:#000000;"></div>
<div style="left:607px;top:162px;width:2px;height:2px;background:#000000;"></div>
<div style="left:615px;top:162px;width:2px;height:2px;background:#000000;"></div>
<div style="left:607px;top:166px;width:2px;height:2px;background:#000000;"></div>
<div style="left:615px;top:166px;width:2px;height:2px;background:#000000;"></div>
<div style="left:607px;top:168px;width:4px;height:2px;background:#000000;"></div>
<div style="left:613px;top:168px;width:4px;height:2px;background:#000000;"></div>
<div style="left:611px;top:162px;width:2px;height:2px;background:#585858;"></div>
<div style="left:609px;top:164px;width:6px;height:2px;background:#585858;"></div>
<div style="left:611px;top:166px;width:2px;height:2px;background:#585858;"></div>
<div style="left:629px;top:160px;width:2px;height:2px;background:#000000;"></div>
<div style="left:629px;top:162px;width:4px;height:2px;background:#000000;"></div>
<div style="left:629px;top:164px;width:6px;height:2px;background:#000000;"></div>
<div style="left:629px;top:166px;width:4px;height:2px;background:#000000;"></div>
<div style="left:629px;top:168px;width:2px;height:2px;background:#000000;"></div>
<div style="left:647px;top:160px;width:2px;height:2px;background:#000000;"></div>
<div style="left:655px;top:160px;width:2px;height:2px;background:#000000;"></div>
<div style="left:649px;top:162px;width:2px;height:2px;background:#000000;"></div>
<div style="left:653px;top:162px;width:2px;height:2px;background:#000000;"></div>
<div style="left:651px;top:164px;width:2px;height:2px;background:#000000;"></div>
<div style="left:649px;top:166px;width:2px;height:2px;background:#000000;"></div>
<div style="left:653px;top:166px;width:2px;height:2px;background:#000000;"></div>
<div style="left:647px;top:168px;width:2px;height:2px;background:#000000;"></div>
<div style="left:655px;top:168px;width:2px;height:2px;background:#000000;"></div>
<div style="left:163px;top:192px;width:492px;height:417px;background:#000000;"></div>
<div style="left:165px;top:194px;width:488px;height:413px;background:#787878;"></div>
<div style="left:167px;top:196px;width:484px;height:409px;background:#000000;"></div>
<div style="left:169px;top:198px;width:480px;height:405px;background:#ffffff;"></div>
<svg style="left:0;top:0;will-change:transform" width="681" height="630" viewBox="0 0 681 630" shape-rendering="auto">
<rect x="213" y="233" width="389" height="314" fill="#0c0a0c"/>
<defs><clipPath id="cg"><rect x="244" y="251.8" width="357.300" height="243.200"/></clipPath><clipPath id="cv"><rect x="244" y="501" width="357.300" height="45.600"/></clipPath><clipPath id="ck"><rect x="214" y="251" width="29.200" height="244"/></clipPath></defs>
<rect x="214" y="234" width="29.500" height="16.800" fill="#6d758d"/>
<path d="M218.600 234H242V250.600H215.400z" fill="#92dcba"/>
<path d="M218.900 234.500H241.500V250.100H215.900" stroke="#cdf7e2" stroke-width="0.700" fill="none" opacity="0.7"/>
<path d="M214.800 250.500L218.300 234" stroke="#0c0a0c" stroke-width="1.100" fill="none"/>
<rect x="242" y="234" width="1.600" height="17" fill="#0c0a0c"/>
<path d="M240.400 243.600v5.400h-5.400z" fill="#328464"/>
<path d="M235.200 241.800q2.400 0 2.400 -2.200q0 -2.400 2.600 -2.400" stroke="#328464" stroke-width="1" fill="none"/>
<rect x="244" y="234" width="357.300" height="8" fill="#16141a"/>
<rect x="244" y="234.300" width="6.200" height="7" fill="#b3b9d1"/>
<path d="M248.800 235.300v5l-3.400-2.500z" fill="#0c0a0c"/>
<rect x="250.800" y="234.400" width="343" height="6.800" fill="#3a404a"/>
<rect x="251.300" y="234.600" width="205.800" height="6.200" fill="#566070" stroke="#737c94" stroke-width="0.800"/>
<rect x="594.300" y="234.300" width="6.800" height="7" fill="#b3b9d1"/>
<path d="M596 235.300v5l3.600-2.500z" fill="#0c0a0c"/>
<rect x="244" y="242" width="357.300" height="10" fill="#1c1516"/>
<rect x="243.00" y="248" width="1" height="3.500" fill="#8b93af" opacity="0.8"/>
<rect x="249.00" y="249.500" width="1" height="2" fill="#6d758d" opacity="0.55"/>
<rect x="255.00" y="249.500" width="1" height="2" fill="#6d758d" opacity="0.55"/>
<rect x="261.00" y="249.500" width="1" height="2" fill="#6d758d" opacity="0.55"/>
<rect x="267.00" y="248.800" width="1" height="2.700" fill="#8b93af" opacity="0.6"/>
<rect x="273.00" y="249.500" width="1" height="2" fill="#6d758d" opacity="0.55"/>
<rect x="279.00" y="249.500" width="1" height="2" fill="#6d758d" opacity="0.55"/>
<rect x="285.00" y="249.500" width="1" height="2" fill="#6d758d" opacity="0.55"/>
<rect x="291.00" y="248.800" width="1" height="2.700" fill="#8b93af" opacity="0.6"/>
<rect x="297.00" y="249.500" width="1" height="2" fill="#6d758d" opacity="0.55"/>
<rect x="303.00" y="249.500" width="1" height="2" fill="#6d758d" opacity="0.55"/>
<rect x="309.00" y="249.500" width="1" height="2" fill="#6d758d" opacity="0.55"/>
<rect x="315.00" y="248.800" width="1" height="2.700" fill="#8b93af" opacity="0.6"/>
<rect x="321.00" y="249.500" width="1" height="2" fill="#6d758d" opacity="0.55"/>
<rect x="327.00" y="249.500" width="1" height="2" fill="#6d758d" opacity="0.55"/>
<rect x="333.00" y="249.500" width="1" height="2" fill="#6d758d" opacity="0.55"/>
<rect x="339.00" y="248" width="1" height="3.500" fill="#8b93af" opacity="0.8"/>
<rect x="345.00" y="249.500" width="1" height="2" fill="#6d758d" opacity="0.55"/>
<rect x="351.00" y="249.500" width="1" height="2" fill="#6d758d" opacity="0.55"/>
<rect x="357.00" y="249.500" width="1" height="2" fill="#6d758d" opacity="0.55"/>
<rect x="363.00" y="248.800" width="1" height="2.700" fill="#8b93af" opacity="0.6"/>
<rect x="369.00" y="249.500" width="1" height="2" fill="#6d758d" opacity="0.55"/>
<rect x="375.00" y="249.500" width="1" height="2" fill="#6d758d" opacity="0.55"/>
<rect x="381.00" y="249.500" width="1" height="2" fill="#6d758d" opacity="0.55"/>
<rect x="387.00" y="248.800" width="1" height="2.700" fill="#8b93af" opacity="0.6"/>
<rect x="393.00" y="249.500" width="1" height="2" fill="#6d758d" opacity="0.55"/>
<rect x="399.00" y="249.500" width="1" height="2" fill="#6d758d" opacity="0.55"/>
<rect x="405.00" y="249.500" width="1" height="2" fill="#6d758d" opacity="0.55"/>
<rect x="411.00" y="248.800" width="1" height="2.700" fill="#8b93af" opacity="0.6"/>
<rect x="417.00" y="249.500" width="1" height="2" fill="#6d758d" opacity="0.55"/>
<rect x="423.00" y="249.500" width="1" height="2" fill="#6d758d" opacity="0.55"/>
<rect x="429.00" y="249.500" width="1" height="2" fill="#6d758d" opacity="0.55"/>
<rect x="435.00" y="248" width="1" height="3.500" fill="#8b93af" opacity="0.8"/>
<rect x="441.00" y="249.500" width="1" height="2" fill="#6d758d" opacity="0.55"/>
<rect x="447.00" y="249.500" width="1" height="2" fill="#6d758d" opacity="0.55"/>
<rect x="453.00" y="249.500" width="1" height="2" fill="#6d758d" opacity="0.55"/>
<rect x="459.00" y="248.800" width="1" height="2.700" fill="#8b93af" opacity="0.6"/>
<rect x="465.00" y="249.500" width="1" height="2" fill="#6d758d" opacity="0.55"/>
<rect x="471.00" y="249.500" width="1" height="2" fill="#6d758d" opacity="0.55"/>
<rect x="477.00" y="249.500" width="1" height="2" fill="#6d758d" opacity="0.55"/>
<rect x="483.00" y="248.800" width="1" height="2.700" fill="#8b93af" opacity="0.6"/>
<rect x="489.00" y="249.500" width="1" height="2" fill="#6d758d" opacity="0.55"/>
<rect x="495.00" y="249.500" width="1" height="2" fill="#6d758d" opacity="0.55"/>
<rect x="501.00" y="249.500" width="1" height="2" fill="#6d758d" opacity="0.55"/>
<rect x="507.00" y="248.800" width="1" height="2.700" fill="#8b93af" opacity="0.6"/>
<rect x="513.00" y="249.500" width="1" height="2" fill="#6d758d" opacity="0.55"/>
<rect x="519.00" y="249.500" width="1" height="2" fill="#6d758d" opacity="0.55"/>
<rect x="525.00" y="249.500" width="1" height="2" fill="#6d758d" opacity="0.55"/>
<rect x="531.00" y="248" width="1" height="3.500" fill="#8b93af" opacity="0.8"/>
<rect x="537.00" y="249.500" width="1" height="2" fill="#6d758d" opacity="0.55"/>
<rect x="543.00" y="249.500" width="1" height="2" fill="#6d758d" opacity="0.55"/>
<rect x="549.00" y="249.500" width="1" height="2" fill="#6d758d" opacity="0.55"/>
<rect x="555.00" y="248.800" width="1" height="2.700" fill="#8b93af" opacity="0.6"/>
<rect x="561.00" y="249.500" width="1" height="2" fill="#6d758d" opacity="0.55"/>
<rect x="567.00" y="249.500" width="1" height="2" fill="#6d758d" opacity="0.55"/>
<rect x="573.00" y="249.500" width="1" height="2" fill="#6d758d" opacity="0.55"/>
<rect x="579.00" y="248.800" width="1" height="2.700" fill="#8b93af" opacity="0.6"/>
<rect x="585.00" y="249.500" width="1" height="2" fill="#6d758d" opacity="0.55"/>
<rect x="591.00" y="249.500" width="1" height="2" fill="#6d758d" opacity="0.55"/>
<rect x="597.00" y="249.500" width="1" height="2" fill="#6d758d" opacity="0.55"/>
<text x="245.2" y="248.600" font-family="Liberation Mono, monospace" font-weight="bold" font-size="6.800" fill="#e3e6ff">1</text>
<text x="341.2" y="248.600" font-family="Liberation Mono, monospace" font-weight="bold" font-size="6.800" fill="#e3e6ff">2</text>
<text x="437.2" y="248.600" font-family="Liberation Mono, monospace" font-weight="bold" font-size="6.800" fill="#e3e6ff">3</text>
<text x="533.2" y="248.600" font-family="Liberation Mono, monospace" font-weight="bold" font-size="6.800" fill="#e3e6ff">4</text>
<g clip-path="url(#cg)">
<rect x="244" y="250" width="358" height="246" fill="#4a5462"/>
<rect x="244" y="250.75" width="358" height="5.25" fill="#333941"/>
<rect x="244" y="261.25" width="358" height="5.25" fill="#333941"/>
<rect x="244" y="271.75" width="358" height="5.25" fill="#333941"/>
<rect x="244" y="287.50" width="358" height="5.25" fill="#333941"/>
<rect x="244" y="298.00" width="358" height="5.25" fill="#333941"/>
<rect x="244" y="313.75" width="358" height="5.25" fill="#333941"/>
<rect x="244" y="324.25" width="358" height="5.25" fill="#333941"/>
<rect x="244" y="334.75" width="358" height="5.25" fill="#333941"/>
<rect x="244" y="350.50" width="358" height="5.25" fill="#333941"/>
<rect x="244" y="361.00" width="358" height="5.25" fill="#333941"/>
<rect x="244" y="376.75" width="358" height="5.25" fill="#333941"/>
<rect x="244" y="387.25" width="358" height="5.25" fill="#333941"/>
<rect x="244" y="397.75" width="358" height="5.25" fill="#333941"/>
<rect x="244" y="413.50" width="358" height="5.25" fill="#333941"/>
<rect x="244" y="424.00" width="358" height="5.25" fill="#333941"/>
<rect x="244" y="439.75" width="358" height="5.25" fill="#333941"/>
<rect x="244" y="450.25" width="358" height="5.25" fill="#333941"/>
<rect x="244" y="460.75" width="358" height="5.25" fill="#333941"/>
<rect x="244" y="476.50" width="358" height="5.25" fill="#333941"/>
<rect x="244" y="487.00" width="358" height="5.25" fill="#333941"/>
<rect x="244" y="250.15" width="358" height="1.200" fill="#7a849f" opacity="0.78"/>
<rect x="244" y="254.80" width="358" height="1.200" fill="#7a849f" opacity="0.78"/>
<rect x="244" y="260.65" width="358" height="1.200" fill="#7a849f" opacity="0.78"/>
<rect x="244" y="265.90" width="358" height="1.200" fill="#7a849f" opacity="0.78"/>
<rect x="244" y="271.15" width="358" height="1.200" fill="#7a849f" opacity="0.78"/>
<rect x="244" y="276.40" width="358" height="1.200" fill="#7a849f" opacity="0.78"/>
<rect x="244" y="281.65" width="358" height="1.200" fill="#7a849f" opacity="0.78"/>
<rect x="244" y="286.90" width="358" height="1.200" fill="#7a849f" opacity="0.78"/>
<rect x="244" y="292.15" width="358" height="1.200" fill="#7a849f" opacity="0.78"/>
<rect x="244" y="297.40" width="358" height="1.200" fill="#7a849f" opacity="0.78"/>
<rect x="244" y="302.65" width="358" height="1.200" fill="#7a849f" opacity="0.78"/>
<rect x="244" y="307.90" width="358" height="1.200" fill="#7a849f" opacity="0.78"/>
<rect x="244" y="313.15" width="358" height="1.200" fill="#7a849f" opacity="0.78"/>
<rect x="244" y="318.40" width="358" height="1.200" fill="#7a849f" opacity="0.78"/>
<rect x="244" y="323.65" width="358" height="1.200" fill="#7a849f" opacity="0.78"/>
<rect x="244" y="328.90" width="358" height="1.200" fill="#7a849f" opacity="0.78"/>
<rect x="244" y="334.15" width="358" height="1.200" fill="#7a849f" opacity="0.78"/>
<rect x="244" y="339.40" width="358" height="1.200" fill="#7a849f" opacity="0.78"/>
<rect x="244" y="344.65" width="358" height="1.200" fill="#7a849f" opacity="0.78"/>
<rect x="244" y="349.90" width="358" height="1.200" fill="#7a849f" opacity="0.78"/>
<rect x="244" y="355.15" width="358" height="1.200" fill="#7a849f" opacity="0.78"/>
<rect x="244" y="360.40" width="358" height="1.200" fill="#7a849f" opacity="0.78"/>
<rect x="244" y="365.65" width="358" height="1.200" fill="#7a849f" opacity="0.78"/>
<rect x="244" y="370.90" width="358" height="1.200" fill="#7a849f" opacity="0.78"/>
<rect x="244" y="376.15" width="358" height="1.200" fill="#7a849f" opacity="0.78"/>
<rect x="244" y="381.40" width="358" height="1.200" fill="#7a849f" opacity="0.78"/>
<rect x="244" y="386.65" width="358" height="1.200" fill="#7a849f" opacity="0.78"/>
<rect x="244" y="391.90" width="358" height="1.200" fill="#7a849f" opacity="0.78"/>
<rect x="244" y="397.15" width="358" height="1.200" fill="#7a849f" opacity="0.78"/>
<rect x="244" y="402.40" width="358" height="1.200" fill="#7a849f" opacity="0.78"/>
<rect x="244" y="407.65" width="358" height="1.200" fill="#7a849f" opacity="0.78"/>
<rect x="244" y="412.90" width="358" height="1.200" fill="#7a849f" opacity="0.78"/>
<rect x="244" y="418.15" width="358" height="1.200" fill="#7a849f" opacity="0.78"/>
<rect x="244" y="423.40" width="358" height="1.200" fill="#7a849f" opacity="0.78"/>
<rect x="244" y="428.65" width="358" height="1.200" fill="#7a849f" opacity="0.78"/>
<rect x="244" y="433.90" width="358" height="1.200" fill="#7a849f" opacity="0.78"/>
<rect x="244" y="439.15" width="358" height="1.200" fill="#7a849f" opacity="0.78"/>
<rect x="244" y="444.40" width="358" height="1.200" fill="#7a849f" opacity="0.78"/>
<rect x="244" y="449.65" width="358" height="1.200" fill="#7a849f" opacity="0.78"/>
<rect x="244" y="454.90" width="358" height="1.200" fill="#7a849f" opacity="0.78"/>
<rect x="244" y="460.15" width="358" height="1.200" fill="#7a849f" opacity="0.78"/>
<rect x="244" y="465.40" width="358" height="1.200" fill="#7a849f" opacity="0.78"/>
<rect x="244" y="470.65" width="358" height="1.200" fill="#7a849f" opacity="0.78"/>
<rect x="244" y="475.90" width="358" height="1.200" fill="#7a849f" opacity="0.78"/>
<rect x="244" y="481.15" width="358" height="1.200" fill="#7a849f" opacity="0.78"/>
<rect x="244" y="486.40" width="358" height="1.200" fill="#7a849f" opacity="0.78"/>
<rect x="244" y="491.65" width="358" height="1.200" fill="#7a849f" opacity="0.78"/>
<rect x="244" y="496.90" width="358" height="1.200" fill="#7a849f" opacity="0.78"/>
<rect x="244" y="502.15" width="358" height="1.200" fill="#7a849f" opacity="0.78"/>
<rect x="242.85" y="250" width="1.300" height="246" fill="#9aa3c2" opacity="0.75"/>
<rect x="248.85" y="250" width="1.300" height="246" fill="#8b93af" opacity="0.42"/>
<rect x="254.85" y="250" width="1.300" height="246" fill="#8b93af" opacity="0.42"/>
<rect x="260.85" y="250" width="1.300" height="246" fill="#8b93af" opacity="0.42"/>
<rect x="266.85" y="250" width="1.300" height="246" fill="#8b93af" opacity="0.6"/>
<rect x="272.85" y="250" width="1.300" height="246" fill="#8b93af" opacity="0.42"/>
<rect x="278.85" y="250" width="1.300" height="246" fill="#8b93af" opacity="0.42"/>
<rect x="284.85" y="250" width="1.300" height="246" fill="#8b93af" opacity="0.42"/>
<rect x="290.85" y="250" width="1.300" height="246" fill="#8b93af" opacity="0.6"/>
<rect x="296.85" y="250" width="1.300" height="246" fill="#8b93af" opacity="0.42"/>
<rect x="302.85" y="250" width="1.300" height="246" fill="#8b93af" opacity="0.42"/>
<rect x="308.85" y="250" width="1.300" height="246" fill="#8b93af" opacity="0.42"/>
<rect x="314.85" y="250" width="1.300" height="246" fill="#8b93af" opacity="0.6"/>
<rect x="320.85" y="250" width="1.300" height="246" fill="#8b93af" opacity="0.42"/>
<rect x="326.85" y="250" width="1.300" height="246" fill="#8b93af" opacity="0.42"/>
<rect x="332.85" y="250" width="1.300" height="246" fill="#8b93af" opacity="0.42"/>
<rect x="338.85" y="250" width="1.300" height="246" fill="#9aa3c2" opacity="0.75"/>
<rect x="344.85" y="250" width="1.300" height="246" fill="#8b93af" opacity="0.42"/>
<rect x="350.85" y="250" width="1.300" height="246" fill="#8b93af" opacity="0.42"/>
<rect x="356.85" y="250" width="1.300" height="246" fill="#8b93af" opacity="0.42"/>
<rect x="362.85" y="250" width="1.300" height="246" fill="#8b93af" opacity="0.6"/>
<rect x="368.85" y="250" width="1.300" height="246" fill="#8b93af" opacity="0.42"/>
<rect x="374.85" y="250" width="1.300" height="246" fill="#8b93af" opacity="0.42"/>
<rect x="380.85" y="250" width="1.300" height="246" fill="#8b93af" opacity="0.42"/>
<rect x="386.85" y="250" width="1.300" height="246" fill="#8b93af" opacity="0.6"/>
<rect x="392.85" y="250" width="1.300" height="246" fill="#8b93af" opacity="0.42"/>
<rect x="398.85" y="250" width="1.300" height="246" fill="#8b93af" opacity="0.42"/>
<rect x="404.85" y="250" width="1.300" height="246" fill="#8b93af" opacity="0.42"/>
<rect x="410.85" y="250" width="1.300" height="246" fill="#8b93af" opacity="0.6"/>
<rect x="416.85" y="250" width="1.300" height="246" fill="#8b93af" opacity="0.42"/>
<rect x="422.85" y="250" width="1.300" height="246" fill="#8b93af" opacity="0.42"/>
<rect x="428.85" y="250" width="1.300" height="246" fill="#8b93af" opacity="0.42"/>
<rect x="434.85" y="250" width="1.300" height="246" fill="#9aa3c2" opacity="0.75"/>
<rect x="440.85" y="250" width="1.300" height="246" fill="#8b93af" opacity="0.42"/>
<rect x="446.85" y="250" width="1.300" height="246" fill="#8b93af" opacity="0.42"/>
<rect x="452.85" y="250" width="1.300" height="246" fill="#8b93af" opacity="0.42"/>
<rect x="458.85" y="250" width="1.300" height="246" fill="#8b93af" opacity="0.6"/>
<rect x="464.85" y="250" width="1.300" height="246" fill="#8b93af" opacity="0.42"/>
<rect x="470.85" y="250" width="1.300" height="246" fill="#8b93af" opacity="0.42"/>
<rect x="476.85" y="250" width="1.300" height="246" fill="#8b93af" opacity="0.42"/>
<rect x="482.85" y="250" width="1.300" height="246" fill="#8b93af" opacity="0.6"/>
<rect x="488.85" y="250" width="1.300" height="246" fill="#8b93af" opacity="0.42"/>
<rect x="494.85" y="250" width="1.300" height="246" fill="#8b93af" opacity="0.42"/>
<rect x="500.85" y="250" width="1.300" height="246" fill="#8b93af" opacity="0.42"/>
<rect x="506.85" y="250" width="1.300" height="246" fill="#8b93af" opacity="0.6"/>
<rect x="512.85" y="250" width="1.300" height="246" fill="#8b93af" opacity="0.42"/>
<rect x="518.85" y="250" width="1.300" height="246" fill="#8b93af" opacity="0.42"/>
<rect x="524.85" y="250" width="1.300" height="246" fill="#8b93af" opacity="0.42"/>
<rect x="530.85" y="250" width="1.300" height="246" fill="#9aa3c2" opacity="0.75"/>
<rect x="536.85" y="250" width="1.300" height="246" fill="#8b93af" opacity="0.42"/>
<rect x="542.85" y="250" width="1.300" height="246" fill="#8b93af" opacity="0.42"/>
<rect x="548.85" y="250" width="1.300" height="246" fill="#8b93af" opacity="0.42"/>
<rect x="554.85" y="250" width="1.300" height="246" fill="#8b93af" opacity="0.6"/>
<rect x="560.85" y="250" width="1.300" height="246" fill="#8b93af" opacity="0.42"/>
<rect x="566.85" y="250" width="1.300" height="246" fill="#8b93af" opacity="0.42"/>
<rect x="572.85" y="250" width="1.300" height="246" fill="#8b93af" opacity="0.42"/>
<rect x="578.85" y="250" width="1.300" height="246" fill="#8b93af" opacity="0.6"/>
<rect x="584.85" y="250" width="1.300" height="246" fill="#8b93af" opacity="0.42"/>
<rect x="590.85" y="250" width="1.300" height="246" fill="#8b93af" opacity="0.42"/>
<rect x="596.85" y="250" width="1.300" height="246" fill="#8b93af" opacity="0.42"/>
<rect x="602.85" y="250" width="1.300" height="246" fill="#8b93af" opacity="0.6"/>
<rect x="255.50" y="308.50" width="6.00" height="5.55" fill="#5daf8d"/>
<rect x="255.50" y="308.50" width="5.30" height="4.35" fill="#92dcba"/>
<rect x="255.50" y="308.50" width="5.30" height="0.800" fill="#cdf7e2" opacity="0.65"/>
<rect x="255.50" y="308.50" width="0.800" height="4.35" fill="#cdf7e2" opacity="0.65"/>
<rect x="243.50" y="319.00" width="6.00" height="5.55" fill="#5daf8d"/>
<rect x="243.50" y="319.00" width="5.30" height="4.35" fill="#92dcba"/>
<rect x="243.50" y="319.00" width="5.30" height="0.800" fill="#cdf7e2" opacity="0.65"/>
<rect x="243.50" y="319.00" width="0.800" height="4.35" fill="#cdf7e2" opacity="0.65"/>
<rect x="267.50" y="329.50" width="12.00" height="5.55" fill="#5daf8d"/>
<rect x="267.50" y="329.50" width="11.30" height="4.35" fill="#92dcba"/>
<rect x="267.50" y="329.50" width="11.30" height="0.800" fill="#cdf7e2" opacity="0.65"/>
<rect x="267.50" y="329.50" width="0.800" height="4.35" fill="#cdf7e2" opacity="0.65"/>
<rect x="255.50" y="345.25" width="12.00" height="5.55" fill="#5daf8d"/>
<rect x="255.50" y="345.25" width="11.30" height="4.35" fill="#92dcba"/>
<rect x="255.50" y="345.25" width="11.30" height="0.800" fill="#cdf7e2" opacity="0.65"/>
<rect x="255.50" y="345.25" width="0.800" height="4.35" fill="#cdf7e2" opacity="0.65"/>
<rect x="243.50" y="366.25" width="12.00" height="5.55" fill="#5daf8d"/>
<rect x="243.50" y="366.25" width="11.30" height="4.35" fill="#92dcba"/>
<rect x="243.50" y="366.25" width="11.30" height="0.800" fill="#cdf7e2" opacity="0.65"/>
<rect x="243.50" y="366.25" width="0.800" height="4.35" fill="#cdf7e2" opacity="0.65"/>
<rect x="279.50" y="355.75" width="18.00" height="5.55" fill="#6d758d"/>
<rect x="279.50" y="355.75" width="17.30" height="4.35" fill="#8b93af"/>
<rect x="279.50" y="355.75" width="17.30" height="0.800" fill="#b3b9d1" opacity="0.65"/>
<rect x="279.50" y="355.75" width="0.800" height="4.35" fill="#b3b9d1" opacity="0.65"/>
<rect x="375.50" y="382.00" width="12.00" height="5.55" fill="#285cc4"/>
<rect x="375.50" y="382.00" width="11.30" height="4.35" fill="#588dbe"/>
<rect x="375.50" y="382.00" width="11.30" height="0.800" fill="#a0c8ea" opacity="0.65"/>
<rect x="375.50" y="382.00" width="0.800" height="4.35" fill="#a0c8ea" opacity="0.65"/>
<rect x="375.50" y="403.00" width="12.00" height="5.55" fill="#285cc4"/>
<rect x="375.50" y="403.00" width="11.30" height="4.35" fill="#588dbe"/>
<rect x="375.50" y="403.00" width="11.30" height="0.800" fill="#a0c8ea" opacity="0.65"/>
<rect x="375.50" y="403.00" width="0.800" height="4.35" fill="#a0c8ea" opacity="0.65"/>
<rect x="375.50" y="418.75" width="12.00" height="5.55" fill="#285cc4"/>
<rect x="375.50" y="418.75" width="11.30" height="4.35" fill="#588dbe"/>
<rect x="375.50" y="418.75" width="11.30" height="0.800" fill="#a0c8ea" opacity="0.65"/>
<rect x="375.50" y="418.75" width="0.800" height="4.35" fill="#a0c8ea" opacity="0.65"/>
<rect x="375.50" y="434.50" width="12.00" height="5.55" fill="#285cc4"/>
<rect x="375.50" y="434.50" width="11.30" height="4.35" fill="#588dbe"/>
<rect x="375.50" y="434.50" width="11.30" height="0.800" fill="#a0c8ea" opacity="0.65"/>
<rect x="375.50" y="434.50" width="0.800" height="4.35" fill="#a0c8ea" opacity="0.65"/>
<rect x="357.50" y="397.75" width="12.00" height="5.55" fill="#285cc4"/>
<rect x="357.50" y="397.75" width="11.30" height="4.35" fill="#849be4"/>
<rect x="357.50" y="397.75" width="11.30" height="0.800" fill="#b9bffb" opacity="0.65"/>
<rect x="357.50" y="397.75" width="0.800" height="4.35" fill="#b9bffb" opacity="0.65"/>
<rect x="357.50" y="413.50" width="12.00" height="5.55" fill="#285cc4"/>
<rect x="357.50" y="413.50" width="11.30" height="4.35" fill="#849be4"/>
<rect x="357.50" y="413.50" width="11.30" height="0.800" fill="#b9bffb" opacity="0.65"/>
<rect x="357.50" y="413.50" width="0.800" height="4.35" fill="#b9bffb" opacity="0.65"/>
<rect x="357.50" y="450.25" width="12.00" height="5.55" fill="#285cc4"/>
<rect x="357.50" y="450.25" width="11.30" height="4.35" fill="#849be4"/>
<rect x="357.50" y="450.25" width="11.30" height="0.800" fill="#b9bffb" opacity="0.65"/>
<rect x="357.50" y="450.25" width="0.800" height="4.35" fill="#b9bffb" opacity="0.65"/>
<rect x="339.50" y="424.00" width="12.00" height="5.55" fill="#285cc4"/>
<rect x="339.50" y="424.00" width="11.30" height="4.35" fill="#849be4"/>
<rect x="339.50" y="424.00" width="11.30" height="0.800" fill="#b9bffb" opacity="0.65"/>
<rect x="339.50" y="424.00" width="0.800" height="4.35" fill="#b9bffb" opacity="0.65"/>
<rect x="339.50" y="439.75" width="12.00" height="5.55" fill="#285cc4"/>
<rect x="339.50" y="439.75" width="11.30" height="4.35" fill="#849be4"/>
<rect x="339.50" y="439.75" width="11.30" height="0.800" fill="#b9bffb" opacity="0.65"/>
<rect x="339.50" y="439.75" width="0.800" height="4.35" fill="#b9bffb" opacity="0.65"/>
<rect x="339.50" y="460.75" width="12.00" height="5.55" fill="#285cc4"/>
<rect x="339.50" y="460.75" width="11.30" height="4.35" fill="#849be4"/>
<rect x="339.50" y="460.75" width="11.30" height="0.800" fill="#b9bffb" opacity="0.65"/>
<rect x="339.50" y="460.75" width="0.800" height="4.35" fill="#b9bffb" opacity="0.65"/>
<polygon points="423.50,324.25 435.50,324.25 459.50,355.75 471.50,355.75 501.50,345.25 513.50,345.25 531.50,397.75 543.50,397.75 543.50,403.00 531.50,403.00 513.50,350.50 501.50,350.50 471.50,361.00 459.50,361.00 435.50,329.50 423.50,329.50" fill="#92dcba"/>
<polyline points="423.50,329.00 435.50,329.00 459.50,360.50 471.50,360.50 501.50,350.00 513.50,350.00 531.50,402.50 543.50,402.50" fill="none" stroke="#5daf8d" stroke-width="1.300"/>
<polyline points="423.50,324.75 435.50,324.75 459.50,356.25 471.50,356.25 501.50,345.75 513.50,345.75 531.50,398.25 543.50,398.25" fill="none" stroke="#cdf7e2" stroke-width="0.800" opacity="0.8"/>
<rect x="287.200" y="250" width="1.800" height="246" fill="#f9a31b"/>
<rect x="286.800" y="250" width="0.600" height="246" fill="#fa6a0a" opacity="0.8"/>
</g>
<path d="M283.800 243.800h9.400l-4.700 5.600z" fill="#fa6a0a"/>
<path d="M285.500 244.600h6l-3 3z" fill="#f9a31b"/>
<rect x="287.200" y="248.500" width="1.800" height="3.500" fill="#f9a31b"/>
<g clip-path="url(#ck)">
<rect x="214" y="250" width="29.500" height="246" fill="#dde2ee"/>
<rect x="238" y="250" width="3.400" height="246" fill="#b3b9d1" opacity="0.75"/>
<rect x="231" y="237.10" width="12" height="8.400" fill="#dde2ee"/>
<rect x="214" y="244.90" width="30" height="1.200" fill="#2a2024"/>
<rect x="214" y="246.10" width="24" height="1.100" fill="#ffffff" opacity="0.75"/>
<rect x="214" y="217.90" width="30" height="1.200" fill="#2a2024"/>
<rect x="214" y="219.10" width="24" height="1.100" fill="#ffffff" opacity="0.75"/>
<rect x="229" y="235.95" width="15" height="1.100" fill="#2a2024"/>
<path d="M214 233.60H229.200Q231.400 236.50 229.200 239.40H214z" fill="#16141a"/>
<rect x="214" y="234.40" width="14.300" height="3.50" fill="#333941"/>
<rect x="229" y="226.95" width="15" height="1.100" fill="#2a2024"/>
<path d="M214 224.60H229.200Q231.400 227.50 229.200 230.40H214z" fill="#16141a"/>
<rect x="214" y="225.40" width="14.300" height="3.50" fill="#333941"/>
<rect x="229" y="208.95" width="15" height="1.100" fill="#2a2024"/>
<path d="M214 206.60H229.200Q231.400 209.50 229.200 212.40H214z" fill="#16141a"/>
<rect x="214" y="207.40" width="14.300" height="3.50" fill="#333941"/>
<rect x="229" y="199.95" width="15" height="1.100" fill="#2a2024"/>
<path d="M214 197.60H229.200Q231.400 200.50 229.200 203.40H214z" fill="#16141a"/>
<rect x="214" y="198.40" width="14.300" height="3.50" fill="#333941"/>
<rect x="229" y="190.95" width="15" height="1.100" fill="#2a2024"/>
<path d="M214 188.60H229.200Q231.400 191.50 229.200 194.40H214z" fill="#16141a"/>
<rect x="214" y="189.40" width="14.300" height="3.50" fill="#333941"/>
<rect x="231" y="300.10" width="12" height="8.400" fill="#dde2ee"/>
<rect x="214" y="307.90" width="30" height="1.200" fill="#2a2024"/>
<rect x="214" y="309.10" width="24" height="1.100" fill="#ffffff" opacity="0.75"/>
<rect x="214" y="280.90" width="30" height="1.200" fill="#2a2024"/>
<rect x="214" y="282.10" width="24" height="1.100" fill="#ffffff" opacity="0.75"/>
<rect x="229" y="298.95" width="15" height="1.100" fill="#2a2024"/>
<path d="M214 296.60H229.200Q231.400 299.50 229.200 302.40H214z" fill="#16141a"/>
<rect x="214" y="297.40" width="14.300" height="3.50" fill="#333941"/>
<rect x="229" y="289.95" width="15" height="1.100" fill="#2a2024"/>
<path d="M214 287.60H229.200Q231.400 290.50 229.200 293.40H214z" fill="#16141a"/>
<rect x="214" y="288.40" width="14.300" height="3.50" fill="#333941"/>
<rect x="229" y="271.95" width="15" height="1.100" fill="#2a2024"/>
<path d="M214 269.60H229.200Q231.400 272.50 229.200 275.40H214z" fill="#16141a"/>
<rect x="214" y="270.40" width="14.300" height="3.50" fill="#333941"/>
<rect x="229" y="262.95" width="15" height="1.100" fill="#2a2024"/>
<path d="M214 260.60H229.200Q231.400 263.50 229.200 266.40H214z" fill="#16141a"/>
<rect x="214" y="261.40" width="14.300" height="3.50" fill="#333941"/>
<rect x="229" y="253.95" width="15" height="1.100" fill="#2a2024"/>
<path d="M214 251.60H229.200Q231.400 254.50 229.200 257.40H214z" fill="#16141a"/>
<rect x="214" y="252.40" width="14.300" height="3.50" fill="#333941"/>
<rect x="231" y="363.10" width="12" height="8.400" fill="#dde2ee"/>
<rect x="214" y="370.90" width="30" height="1.200" fill="#2a2024"/>
<rect x="214" y="372.10" width="24" height="1.100" fill="#ffffff" opacity="0.75"/>
<rect x="214" y="343.90" width="30" height="1.200" fill="#2a2024"/>
<rect x="214" y="345.10" width="24" height="1.100" fill="#ffffff" opacity="0.75"/>
<rect x="229" y="361.95" width="15" height="1.100" fill="#2a2024"/>
<path d="M214 359.60H229.200Q231.400 362.50 229.200 365.40H214z" fill="#16141a"/>
<rect x="214" y="360.40" width="14.300" height="3.50" fill="#333941"/>
<rect x="229" y="352.95" width="15" height="1.100" fill="#2a2024"/>
<path d="M214 350.60H229.200Q231.400 353.50 229.200 356.40H214z" fill="#16141a"/>
<rect x="214" y="351.40" width="14.300" height="3.50" fill="#333941"/>
<rect x="229" y="334.95" width="15" height="1.100" fill="#2a2024"/>
<path d="M214 332.60H229.200Q231.400 335.50 229.200 338.40H214z" fill="#16141a"/>
<rect x="214" y="333.40" width="14.300" height="3.50" fill="#333941"/>
<rect x="229" y="325.95" width="15" height="1.100" fill="#2a2024"/>
<path d="M214 323.60H229.200Q231.400 326.50 229.200 329.40H214z" fill="#16141a"/>
<rect x="214" y="324.40" width="14.300" height="3.50" fill="#333941"/>
<rect x="229" y="316.95" width="15" height="1.100" fill="#2a2024"/>
<path d="M214 314.60H229.200Q231.400 317.50 229.200 320.40H214z" fill="#16141a"/>
<rect x="214" y="315.40" width="14.300" height="3.50" fill="#333941"/>
<rect x="231" y="426.10" width="12" height="8.400" fill="#dde2ee"/>
<rect x="214" y="433.90" width="30" height="1.200" fill="#2a2024"/>
<rect x="214" y="435.10" width="24" height="1.100" fill="#ffffff" opacity="0.75"/>
<rect x="214" y="406.90" width="30" height="1.200" fill="#2a2024"/>
<rect x="214" y="408.10" width="24" height="1.100" fill="#ffffff" opacity="0.75"/>
<rect x="229" y="424.95" width="15" height="1.100" fill="#2a2024"/>
<path d="M214 422.60H229.200Q231.400 425.50 229.200 428.40H214z" fill="#16141a"/>
<rect x="214" y="423.40" width="14.300" height="3.50" fill="#333941"/>
<rect x="229" y="415.95" width="15" height="1.100" fill="#2a2024"/>
<path d="M214 413.60H229.200Q231.400 416.50 229.200 419.40H214z" fill="#16141a"/>
<rect x="214" y="414.40" width="14.300" height="3.50" fill="#333941"/>
<rect x="229" y="397.95" width="15" height="1.100" fill="#2a2024"/>
<path d="M214 395.60H229.200Q231.400 398.50 229.200 401.40H214z" fill="#16141a"/>
<rect x="214" y="396.40" width="14.300" height="3.50" fill="#333941"/>
<rect x="229" y="388.95" width="15" height="1.100" fill="#2a2024"/>
<path d="M214 386.60H229.200Q231.400 389.50 229.200 392.40H214z" fill="#16141a"/>
<rect x="214" y="387.40" width="14.300" height="3.50" fill="#333941"/>
<rect x="229" y="379.95" width="15" height="1.100" fill="#2a2024"/>
<path d="M214 377.60H229.200Q231.400 380.50 229.200 383.40H214z" fill="#16141a"/>
<rect x="214" y="378.40" width="14.300" height="3.50" fill="#333941"/>
<rect x="231" y="489.10" width="12" height="8.400" fill="#dde2ee"/>
<rect x="214" y="496.90" width="30" height="1.200" fill="#2a2024"/>
<rect x="214" y="498.10" width="24" height="1.100" fill="#ffffff" opacity="0.75"/>
<rect x="214" y="469.90" width="30" height="1.200" fill="#2a2024"/>
<rect x="214" y="471.10" width="24" height="1.100" fill="#ffffff" opacity="0.75"/>
<rect x="229" y="487.95" width="15" height="1.100" fill="#2a2024"/>
<path d="M214 485.60H229.200Q231.400 488.50 229.200 491.40H214z" fill="#16141a"/>
<rect x="214" y="486.40" width="14.300" height="3.50" fill="#333941"/>
<rect x="229" y="478.95" width="15" height="1.100" fill="#2a2024"/>
<path d="M214 476.60H229.200Q231.400 479.50 229.200 482.40H214z" fill="#16141a"/>
<rect x="214" y="477.40" width="14.300" height="3.50" fill="#333941"/>
<rect x="229" y="460.95" width="15" height="1.100" fill="#2a2024"/>
<path d="M214 458.60H229.200Q231.400 461.50 229.200 464.40H214z" fill="#16141a"/>
<rect x="214" y="459.40" width="14.300" height="3.50" fill="#333941"/>
<rect x="229" y="451.95" width="15" height="1.100" fill="#2a2024"/>
<path d="M214 449.60H229.200Q231.400 452.50 229.200 455.40H214z" fill="#16141a"/>
<rect x="214" y="450.40" width="14.300" height="3.50" fill="#333941"/>
<rect x="229" y="442.95" width="15" height="1.100" fill="#2a2024"/>
<path d="M214 440.60H229.200Q231.400 443.50 229.200 446.40H214z" fill="#16141a"/>
<rect x="214" y="441.40" width="14.300" height="3.50" fill="#333941"/>
<text x="232.200" y="307.20" font-family="Liberation Sans, sans-serif" font-weight="bold" font-size="7.600" letter-spacing="-0.200" fill="#141013">C6</text>
<text x="232.200" y="370.20" font-family="Liberation Sans, sans-serif" font-weight="bold" font-size="7.600" letter-spacing="-0.200" fill="#141013">C5</text>
<text x="232.200" y="433.20" font-family="Liberation Sans, sans-serif" font-weight="bold" font-size="7.600" letter-spacing="-0.200" fill="#141013">C4</text>
<text x="232.200" y="496.20" font-family="Liberation Sans, sans-serif" font-weight="bold" font-size="7.600" letter-spacing="-0.200" fill="#141013">C3</text>
</g>
<rect x="243" y="251" width="1.100" height="244" fill="#0c0a0c"/>
<rect x="214" y="495" width="387.300" height="6.200" fill="#0c0a0c"/>
<rect x="214" y="496.500" width="387.300" height="3" fill="#6d758d"/>
<rect x="214" y="501" width="28.600" height="45.600" fill="#6d758d"/>
<rect x="242.600" y="501" width="1.400" height="45.600" fill="#0c0a0c"/>
<text x="215.800" y="508.300" font-family="Liberation Mono, monospace" font-weight="bold" font-size="6.600" letter-spacing="-0.150" fill="#e3e6ff">Veloc</text>
<path d="M238.200 502.800v5.200l3-2.600z" fill="#b3b9d1"/>
<g clip-path="url(#cv)">
<rect x="244" y="500" width="358" height="48" fill="#333941"/>
<rect x="244" y="523.2" width="358" height="1" fill="#4a5462" opacity="0.8"/>
<rect x="244" y="535.0" width="358" height="1" fill="#4a5462" opacity="0.8"/>
<rect x="242.85" y="500" width="1.300" height="48" fill="#8b93af" opacity="0.8"/>
<rect x="248.95" y="500" width="1.100" height="48" fill="#4a5462" opacity="0.9"/>
<rect x="254.95" y="500" width="1.100" height="48" fill="#4a5462" opacity="0.9"/>
<rect x="260.95" y="500" width="1.100" height="48" fill="#4a5462" opacity="0.9"/>
<rect x="266.90" y="500" width="1.200" height="48" fill="#6d758d" opacity="0.9"/>
<rect x="272.95" y="500" width="1.100" height="48" fill="#4a5462" opacity="0.9"/>
<rect x="278.95" y="500" width="1.100" height="48" fill="#4a5462" opacity="0.9"/>
<rect x="284.95" y="500" width="1.100" height="48" fill="#4a5462" opacity="0.9"/>
<rect x="290.90" y="500" width="1.200" height="48" fill="#6d758d" opacity="0.9"/>
<rect x="296.95" y="500" width="1.100" height="48" fill="#4a5462" opacity="0.9"/>
<rect x="302.95" y="500" width="1.100" height="48" fill="#4a5462" opacity="0.9"/>
<rect x="308.95" y="500" width="1.100" height="48" fill="#4a5462" opacity="0.9"/>
<rect x="314.90" y="500" width="1.200" height="48" fill="#6d758d" opacity="0.9"/>
<rect x="320.95" y="500" width="1.100" height="48" fill="#4a5462" opacity="0.9"/>
<rect x="326.95" y="500" width="1.100" height="48" fill="#4a5462" opacity="0.9"/>
<rect x="332.95" y="500" width="1.100" height="48" fill="#4a5462" opacity="0.9"/>
<rect x="338.85" y="500" width="1.300" height="48" fill="#8b93af" opacity="0.8"/>
<rect x="344.95" y="500" width="1.100" height="48" fill="#4a5462" opacity="0.9"/>
<rect x="350.95" y="500" width="1.100" height="48" fill="#4a5462" opacity="0.9"/>
<rect x="356.95" y="500" width="1.100" height="48" fill="#4a5462" opacity="0.9"/>
<rect x="362.90" y="500" width="1.200" height="48" fill="#6d758d" opacity="0.9"/>
<rect x="368.95" y="500" width="1.100" height="48" fill="#4a5462" opacity="0.9"/>
<rect x="374.95" y="500" width="1.100" height="48" fill="#4a5462" opacity="0.9"/>
<rect x="380.95" y="500" width="1.100" height="48" fill="#4a5462" opacity="0.9"/>
<rect x="386.90" y="500" width="1.200" height="48" fill="#6d758d" opacity="0.9"/>
<rect x="392.95" y="500" width="1.100" height="48" fill="#4a5462" opacity="0.9"/>
<rect x="398.95" y="500" width="1.100" height="48" fill="#4a5462" opacity="0.9"/>
<rect x="404.95" y="500" width="1.100" height="48" fill="#4a5462" opacity="0.9"/>
<rect x="410.90" y="500" width="1.200" height="48" fill="#6d758d" opacity="0.9"/>
<rect x="416.95" y="500" width="1.100" height="48" fill="#4a5462" opacity="0.9"/>
<rect x="422.95" y="500" width="1.100" height="48" fill="#4a5462" opacity="0.9"/>
<rect x="428.95" y="500" width="1.100" height="48" fill="#4a5462" opacity="0.9"/>
<rect x="434.85" y="500" width="1.300" height="48" fill="#8b93af" opacity="0.8"/>
<rect x="440.95" y="500" width="1.100" height="48" fill="#4a5462" opacity="0.9"/>
<rect x="446.95" y="500" width="1.100" height="48" fill="#4a5462" opacity="0.9"/>
<rect x="452.95" y="500" width="1.100" height="48" fill="#4a5462" opacity="0.9"/>
<rect x="458.90" y="500" width="1.200" height="48" fill="#6d758d" opacity="0.9"/>
<rect x="464.95" y="500" width="1.100" height="48" fill="#4a5462" opacity="0.9"/>
<rect x="470.95" y="500" width="1.100" height="48" fill="#4a5462" opacity="0.9"/>
<rect x="476.95" y="500" width="1.100" height="48" fill="#4a5462" opacity="0.9"/>
<rect x="482.90" y="500" width="1.200" height="48" fill="#6d758d" opacity="0.9"/>
<rect x="488.95" y="500" width="1.100" height="48" fill="#4a5462" opacity="0.9"/>
<rect x="494.95" y="500" width="1.100" height="48" fill="#4a5462" opacity="0.9"/>
<rect x="500.95" y="500" width="1.100" height="48" fill="#4a5462" opacity="0.9"/>
<rect x="506.90" y="500" width="1.200" height="48" fill="#6d758d" opacity="0.9"/>
<rect x="512.95" y="500" width="1.100" height="48" fill="#4a5462" opacity="0.9"/>
<rect x="518.95" y="500" width="1.100" height="48" fill="#4a5462" opacity="0.9"/>
<rect x="524.95" y="500" width="1.100" height="48" fill="#4a5462" opacity="0.9"/>
<rect x="530.85" y="500" width="1.300" height="48" fill="#8b93af" opacity="0.8"/>
<rect x="536.95" y="500" width="1.100" height="48" fill="#4a5462" opacity="0.9"/>
<rect x="542.95" y="500" width="1.100" height="48" fill="#4a5462" opacity="0.9"/>
<rect x="548.95" y="500" width="1.100" height="48" fill="#4a5462" opacity="0.9"/>
<rect x="554.90" y="500" width="1.200" height="48" fill="#6d758d" opacity="0.9"/>
<rect x="560.95" y="500" width="1.100" height="48" fill="#4a5462" opacity="0.9"/>
<rect x="566.95" y="500" width="1.100" height="48" fill="#4a5462" opacity="0.9"/>
<rect x="572.95" y="500" width="1.100" height="48" fill="#4a5462" opacity="0.9"/>
<rect x="578.90" y="500" width="1.200" height="48" fill="#6d758d" opacity="0.9"/>
<rect x="584.95" y="500" width="1.100" height="48" fill="#4a5462" opacity="0.9"/>
<rect x="590.95" y="500" width="1.100" height="48" fill="#4a5462" opacity="0.9"/>
<rect x="596.95" y="500" width="1.100" height="48" fill="#4a5462" opacity="0.9"/>
<rect x="602.90" y="500" width="1.200" height="48" fill="#6d758d" opacity="0.9"/>
<path d="M245.50 512.50L255.50 512.50" stroke="#92dcba" stroke-width="1" fill="none"/>
<rect x="243.90" y="514.60" width="2.200" height="50" fill="#92dcba"/>
<rect x="243.90" y="510.70" width="3" height="3" fill="#92dcba" stroke="#328464" stroke-width="0.700"/>
<path d="M257.50 512.50L267.50 512.50" stroke="#92dcba" stroke-width="1" fill="none"/>
<rect x="255.90" y="514.60" width="2.200" height="50" fill="#92dcba"/>
<rect x="255.90" y="510.70" width="3" height="3" fill="#92dcba" stroke="#328464" stroke-width="0.700"/>
<path d="M269.50 512.50L279.50 512.50" stroke="#92dcba" stroke-width="1" fill="none"/>
<rect x="267.90" y="514.60" width="2.200" height="50" fill="#92dcba"/>
<rect x="267.90" y="510.70" width="3" height="3" fill="#92dcba" stroke="#328464" stroke-width="0.700"/>
<path d="M281.50 512.50L297.50 512.50" stroke="#6d758d" stroke-width="1" fill="none"/>
<rect x="279.90" y="514.60" width="2.200" height="50" fill="#8b93af"/>
<rect x="279.90" y="510.70" width="3" height="3" fill="#8b93af" stroke="#4a5462" stroke-width="0.700"/>
<path d="M341.50 510.50L351.50 510.50" stroke="#849be4" stroke-width="1" fill="none"/>
<rect x="339.90" y="512.60" width="2.200" height="50" fill="#849be4"/>
<rect x="339.90" y="508.70" width="3" height="3" fill="#849be4" stroke="#285cc4" stroke-width="0.700"/>
<path d="M359.50 519.50L369.50 519.50" stroke="#849be4" stroke-width="1" fill="none"/>
<rect x="357.90" y="521.60" width="2.200" height="50" fill="#849be4"/>
<rect x="357.90" y="517.70" width="3" height="3" fill="#849be4" stroke="#285cc4" stroke-width="0.700"/>
<path d="M377.50 533.70L387.50 533.70" stroke="#588dbe" stroke-width="1" fill="none"/>
<rect x="375.90" y="535.80" width="2.200" height="50" fill="#588dbe"/>
<rect x="375.90" y="531.90" width="3" height="3" fill="#588dbe" stroke="#143464" stroke-width="0.700"/>
<polyline points="425.50,512 435.50,512 459.50,528.300 471.50,528.300 501.50,514.800 531.50,511.300 543.50,511.300" fill="none" stroke="#5daf8d" stroke-width="1.100"/>
<path d="M425.50 512.10L425.90 512.10" stroke="#92dcba" stroke-width="1" fill="none"/>
<rect x="423.90" y="514.20" width="2.200" height="50" fill="#92dcba"/>
<rect x="423.90" y="510.30" width="3" height="3" fill="#92dcba" stroke="#328464" stroke-width="0.700"/>
<path d="M461.50 528.50L461.90 528.50" stroke="#92dcba" stroke-width="1" fill="none"/>
<rect x="459.90" y="530.60" width="2.200" height="50" fill="#92dcba"/>
<rect x="459.90" y="526.70" width="3" height="3" fill="#92dcba" stroke="#328464" stroke-width="0.700"/>
<path d="M503.50 515.10L503.90 515.10" stroke="#92dcba" stroke-width="1" fill="none"/>
<rect x="501.90" y="517.20" width="2.200" height="50" fill="#92dcba"/>
<rect x="501.90" y="513.30" width="3" height="3" fill="#92dcba" stroke="#328464" stroke-width="0.700"/>
<path d="M533.50 511.50L533.90 511.50" stroke="#92dcba" stroke-width="1" fill="none"/>
<rect x="531.90" y="513.60" width="2.200" height="50" fill="#92dcba"/>
<rect x="531.90" y="509.70" width="3" height="3" fill="#92dcba" stroke="#328464" stroke-width="0.700"/>
</g>
</svg>
</body></html>
